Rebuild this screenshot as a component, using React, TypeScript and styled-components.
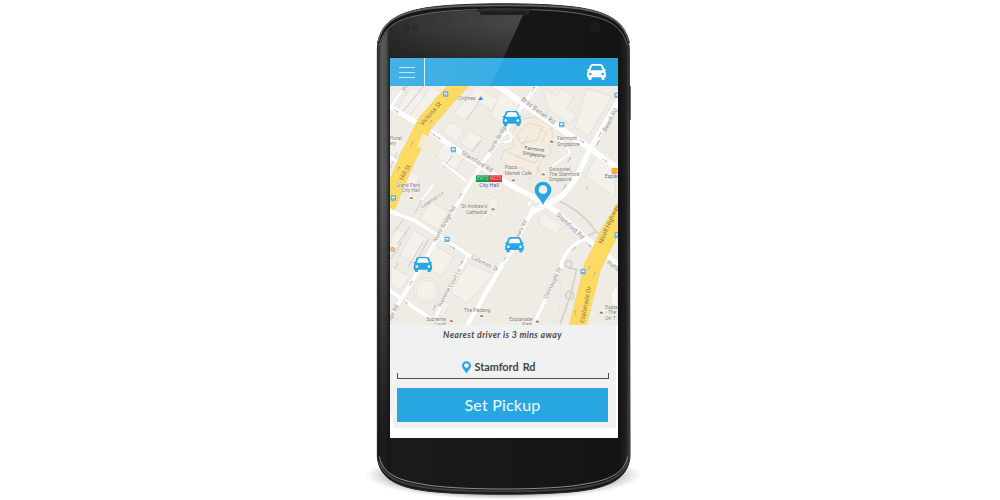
import React from 'react';
import styled, { createGlobalStyle } from 'styled-components';

const Global = createGlobalStyle`
  body { margin: 0; background: #fff; }
  * { box-sizing: border-box; }
`;

const Page = styled.main`
  width: 1000px;
  height: 500px;
  display: flex;
  justify-content: center;
  background: #fff;
  overflow: hidden;
`;

const Phone = styled.div`
  position: relative;
  width: 270px;
  height: 500px;
  margin-left: 10px;
  padding: 58px 22.5px 62px 19.5px;
`;

const Casing = styled.svg`
  position: absolute;
  inset: 0;
  width: 270px;
  height: 500px;
  overflow: visible;
`;

const Screen = styled.section`
  position: relative;
  display: flex;
  flex-direction: column;
  height: 380px;
  background: #fff;
  overflow: hidden;
`;

const Header = styled.header`
  display: flex;
  align-items: center;
  justify-content: space-between;
  height: 28px;
  flex: none;
  padding-right: 11.5px;
  background: linear-gradient(116deg, #45b1e5 0, #3aaee4 102px, #27a6e1 103px);
`;

const MenuButton = styled.button`
  display: flex;
  flex-direction: column;
  justify-content: center;
  gap: 4px;
  width: 35px;
  height: 28px;
  padding: 0 0 0 9px;
  border: 0;
  border-right: 1px solid #d5effb;
  background: none;
`;

const MenuBar = styled.span`
  width: 16px;
  height: 1px;
  background: #c3e8f8;
`;

const MapArea = styled.svg`
  display: block;
  width: 228px;
  height: 239px;
  flex: none;
`;

const Panel = styled.div`
  display: flex;
  flex-direction: column;
  align-items: center;
  height: 103px;
  margin-right: 2px;
  padding: 3px 7px 0;
  background: linear-gradient(#fff, #fff) 0 100% / 3px 13px no-repeat #f1f1f1;
`;

const Notice = styled.p`
  margin: 0;
  height: 14px;
  font: italic 700 8.8px/14px Lato, sans-serif;
  letter-spacing: 0.36px;
  color: #4a4a4a;
  white-space: nowrap;
`;

const Address = styled.div`
  display: flex;
  align-items: center;
  justify-content: center;
  gap: 4px;
  width: 212px;
  height: 22px;
  margin-top: 14px;
  padding-right: 8px;
  font: 700 10.8px/20px Lato, sans-serif;
  word-spacing: 1.5px;
  color: #444;
`;

const Bracket = styled.div`
  width: 212px;
  height: 6px;
  margin-top: -5px;
  border: 1px solid #4d4d4d;
  border-top: 0;
`;

const Pickup = styled.button`
  width: 211px;
  height: 34px;
  margin-top: 9px;
  padding: 0;
  border: 0;
  background: #27a6e1;
  color: #f2fbff;
  font: 400 16px/34px Lato, sans-serif;
  letter-spacing: 0.2px;
`;

const CarIcon = ({ x = 0, y = 0, w = 57, h = 48, body = '#27a6e1', glass = '#fff' }: {
  x?: number; y?: number; w?: number; h?: number; body?: string; glass?: string;
}) => (
  <svg x={x} y={y} width={w} height={h} viewBox="0 0 57 48">
    <path fill={body} d="M17 0h23q6 0 8 5l4 11h3q2 0 2 2t-2 3l-2 1q4 3 4 7v11h-4v4q0 4-5 4t-5-4v-4H14v4q0 4-5 4t-5-4v-4H0V29q0-4 4-7l-2-1q-2-1-2-3t2-2h3L9 5q2-5 8-5Z" />
    <path fill={glass} d="M18 5h21q3 0 4 3l4 11H10l4-11q1-3 4-3Z" />
    <circle cx="10" cy="30" r="4" fill={glass} />
    <circle cx="47" cy="30" r="4" fill={glass} />
  </svg>
);

const Pin = ({ hole = '#f1efe9' }: { hole?: string }) => (
  <>
    <path fill="#27a6e1" d="M25 0a25 25 0 0 1 25 25c0 16-17 25-25 45C17 50 0 41 0 25A25 25 0 0 1 25 0Z" />
    <circle cx="25" cy="24" r="13" fill={hole} />
  </>
);

const roads: [string, number][] = [
  ['M40 307L190 400L300 477L400 543L520 608L560 635L645 712L760 806', 17],
  ['M505 248L455 320L420 375L345 480L290 565L235 660L165 780L95 895L50 970', 12],
  ['M370 248L500 338L662 447L755 515', 19],
  ['M755 285L662 445L625 520Q585 595 535 610L480 640', 17],
  ['M50 630L130 660L200 703L295 765L380 806', 12],
  ['M478 605L490 630Q470 660 430 742L380 822L290 980', 14],
  ['M295 765L240 865L190 965', 9],
  ['M645 714Q580 750 573 800L488 980', 12],
  ['M50 865L130 920L215 980', 13],
  ['M60 322L112 250', 8],
  ['M60 470L90 490', 10],
  ['M155 600L190 555M215 485L290 545', 7],
  ['M395 425Q425 430 425 410Q420 390 400 405M545 500L600 460Q590 425 555 415', 7],
];

const blocks = [
  'M125 258L165 288L110 355L78 334', 'M185 258L213 278L140 362L118 347',
  'M320 260L385 300L365 332L330 312L290 368L250 342', 'M240 365L282 390L260 425L215 395',
  'M395 270L450 310L405 375L360 350', 'M300 390L340 415L310 455L272 430',
  'M230 415L290 455L260 510L200 470', 'M165 405L205 430L180 465L143 438',
  'M520 265L560 290L575 268L610 290L590 325L620 345L600 372L535 328',
  'M650 265L725 290L655 408L615 382', 'M680 470L735 505L735 590L645 530',
  'M60 400L110 430L80 475L60 460', 'M110 505L150 530L120 590L85 570',
  'M185 605L235 635L205 690L150 655', 'M195 735L250 770L215 830L165 800',
  'M295 790L370 822L290 910L240 875', 'M130 690L175 715L130 790L90 765',
  'M72 680L110 700L80 760L60 748', 'M65 800L120 830L90 870L60 850',
  'M210 895L240 910L220 950L190 940',
];

const Label = styled.text<{ $c?: string; $s?: number; $halo?: string }>`
  font: 400 ${p => p.$s ?? 15}px Roboto, sans-serif;
  fill: ${p => p.$c ?? '#85807b'};
  stroke: ${p => p.$halo ?? '#f7f5f0'};
  stroke-width: 2px;
  paint-order: stroke;
`;

const streets: [string, number, number, number, number, string?][] = [
  ['Victoria St', 158, 378, -49, 19, '#8c7749'], ['Hill St', 99, 542, -62, 19, '#8c7749'],
  ['Stamford Rd', 273, 462, 32, 19], ['North Bridge', 364, 460, -60, 17],
  ['Bras Basah Rd', 452, 300, 37, 19], ['Beach Rd', 708, 396, -62, 18],
  ['Coleman Ln', 157, 626, -34, 15], ['North Bridge Rd', 199, 727, -61, 17],
  ['Coleman St', 302, 775, 26, 17], ['Supreme Court Ln', 211, 922, -61, 16],
  ["Andrew's Rd", 432, 742, -63, 16], ['Stamford Rd', 558, 646, 43, 19],
  ['Connaught Dr', 530, 898, -64, 17], ['Esplanade Dr', 641, 970, -78, 19, '#8c7749'],
  ['Nicoll Highway', 696, 733, -66, 19, '#8c7749'], ['Raffles', 710, 790, 38, 17],
  ['Bridge Rd', 50, 982, -60, 17], ['Rd', 103, 274, -55, 15],
];

const places: [string[], number, number, string, string?][] = [
  [['Chijmes'], 263, 301, 'start'], [['Plural', 'ery'], 57, 420, 'start'],
  [['Grand Park', 'City Hall'], 150, 561, 'end'], [['Plaza', 'Market Café'], 404, 508, 'start'],
  [['Fairmont', 'Singapore'], 561, 421, 'start'], [['Swissotel', 'The Stamford', 'Singapore'], 537, 512, 'start'],
  [["St Andrew's", 'Cathedral'], 352, 625, 'end'], [['The Padang'], 281, 936, 'start'],
  [['Supreme', 'Court'], 228, 963, 'end'], [['Esplanade', 'Park'], 487, 963, 'end'],
  [['Espla', '- The', 'On T'], 706, 927, 'start'], [['Esplanade'], 704, 535, 'start', '#4e6c99'],
];

const arrows: [number, number, number][] = [
  [77, 332, 34], [188, 402, 34], [204, 413, 34], [489, 268, -60],
  [270, 588, -60], [122, 850, -60], [181, 367, -50], [125, 431, -62], [85, 508, -65],
  [247, 742, 30], [105, 905, 36], [635, 423, 35], [704, 481, 35], [689, 405, -62], [683, 430, -62],
  [583, 562, -60], [597, 480, -60], [404, 778, -60], [610, 747, -38], [657, 735, 40],
  [657, 805, -70], [673, 822, -70], [616, 940, -80], [192, 924, -62], [274, 790, -62],
];

const CityMap = () => (
  <MapArea viewBox="60 258 684 717" preserveAspectRatio="none">
    <rect x="60" y="258" width="684" height="717" fill="#efece5" />
    <g fill="#f4f1eb" stroke="#dedad4" strokeWidth="2">
      {blocks.map(d => <path key={d} d={`${d}Z`} />)}
      <circle cx="170" cy="872" r="38" />
      <circle cx="170" cy="872" r="31" />
      <path d="M505 650l22-10 50 38-18 27-30-24-12 5Z" />
      <path d="M355 600l26-8 5 22-12 16 12 12-10 9-16-9-22 32-12-8 25-38Z" />
      <path d="M743 850q-35 35-12 75l12 10Z" fill="#faf8ef" />
    </g>
    <g stroke="#c9c7d6" strokeWidth="3" fill="none">
      <path d="M70 700l30-42M82 733l38-53M148 770l28-52M115 800l45-75M60 780l35-55M75 805l10-18M90 345l80-98M170 340l70-80M288 360l50-70M220 505l28-40M135 640l25-52M305 455l28-35M60 505l22-50" />
    </g>
    <path d="M425 400l28-42 40-8 48 22 8 36-12 18 6 32-30 22-15 45-22 12-15-32-40-2-28-25 8-25 32-12Z" fill="#f4eddf" stroke="#dad2c4" strokeWidth="2" />
    <path d="M440 402l35-32 45 10-20 40-48 10ZM505 385l25 12-15 30M430 465l65 25 15-25M410 455l42 16M475 405l-20 35M500 500l15 28" fill="none" stroke="#e3d7c5" strokeWidth="3" />
    <g fill="none" stroke="#d6d1c7" strokeWidth="5">
      <path d="M560 600Q640 635 678 695L735 725M595 803l25 6-18 75-32 90M640 715l38-20" />
      <circle cx="596" cy="792" r="10" /><circle cx="599" cy="886" r="12" />
    </g>
    <path d="M470 670Q565 760 570 840T555 970M420 390q60-75 130 5" fill="none" stroke="#ddd9d0" strokeWidth="2" strokeDasharray="5 3" />
    <g fill="none" stroke="#e3dfd8" strokeLinejoin="round">
      {roads.map(([d, w]) => <path key={d} d={d} strokeWidth={w + 2} />)}
    </g>
    <g fill="none" stroke="#fff" strokeLinejoin="round">
      {roads.map(([d, w]) => <path key={d} d={d} strokeWidth={w} />)}
    </g>
    <g fill="none" strokeLinejoin="round">
      <path d="M280 240L225 300L165 370L110 480L52 620" stroke="#efd06f" strokeWidth="49" />
      <path d="M280 240L225 300L165 370L110 480L52 620" stroke="#fddb62" strokeWidth="47" />
      <path d="M768 620L720 695L668 800L645 890L620 990" stroke="#efd06f" strokeWidth="52" />
      <path d="M768 620L720 695L668 800L645 890L620 990" stroke="#fddb62" strokeWidth="50" />
    </g>
    <path d="M158 400l52 30-20 38-48-30Z" fill="#f1ecd8" opacity=".9" />
    <path d="M485 603l-8 22 18-8Z" fill="#efece5" />
    <g stroke="#a9abbd" strokeWidth="2" fill="none">
      {arrows.map(([x, y, r]) => <path key={`${x}-${y}`} transform={`translate(${x} ${y}) rotate(${r})`} d="M-8 0H8M4-2L8 0L4 2" />)}
    </g>
    {streets.map(([t, x, y, r, s, c]) => (
      <Label key={`${t}${x}`} $s={s} $c={c ?? '#96938f'} $halo={c ? '#fddb62' : undefined} transform={`translate(${x} ${y}) rotate(${r})`}>{t}</Label>
    ))}
    {places.map(([lines, x, y, anchor, c]) => lines.map((t, i) => (
      <Label key={`${t}${x}`} $c={c} x={x} y={y + i * 16} textAnchor={anchor as 'start' | 'end'}>{t}</Label>
    )))}
    <g transform="rotate(8 492 455)">
      <Label $c="#4e4a46" x={492} y={452} textAnchor="middle">Fairmont</Label>
      <Label $c="#4e4a46" x={492} y={468} textAnchor="middle">Singapore</Label>
    </g>
    {[[227, 282], [250, 449], [575, 374], [70, 594], [231, 718], [639, 815], [741, 286], [741, 705]].map(([x, y]) => (
      <g key={`${x}-${y}`} transform={`translate(${x} ${y})`}>
        <rect x="-8" y="-8" width="16" height="16" rx="2" fill="#62ade0" />
        <rect x="-4.500" y="-4" width="9" height="5" fill="#e4f4ff" /><path d="M-4 4h2M2 4h2" stroke="#e4f4ff" strokeWidth="2" />
      </g>
    ))}
    {[[124, 594], [430, 541], [545, 425], [520, 523], [369, 628], [335, 948], [244, 963], [502, 965], [694, 938]].map(([x, y]) => (
      <g key={`${x}-${y}`}><circle cx={x} cy={y} r="9" fill="#faf7f4" stroke="#ddd3cb" /><path d={`M${x - 5} ${y + 3}v-4l5-3 5 3v4Z`} fill="#a98172" /></g>
    ))}
    <path d="M324 300l8-11 8 11Z" fill="#5288cd" />
    <rect x="61" y="741" width="14" height="14" rx="5" fill="#f2a85c" />
    <path d="M65 748h6" stroke="#fff" strokeWidth="3" />
    <rect x="725" y="503" width="18" height="19" rx="2" fill="#f7ad3c" />
    <path d="M648 557h5v15h-5Z" fill="#d9d6d3" />
    <rect x="318" y="526" width="39" height="20" fill="#189b4b" />
    <rect x="357" y="526" width="39" height="20" fill="#dc2b34" />
    <text x="320" y="541" textLength="35" fontFamily="Roboto" fontSize="14" fill="#a5d9b6">EW13</text>
    <text x="359" y="541" textLength="35" fontFamily="Roboto" fontSize="14" fill="#f3a9ab">NS25</text>
    <Label $c="#426496" $s={16} x={357} y={561} textAnchor="middle">City Hall</Label>
    <CarIcon x={397} y={332} w={57} h={47} />
    <CarIcon x={405} y={711} w={57} h={47} />
    <CarIcon x={130} y={770} w={57} h={47} />
    <g transform="translate(494 545)"><Pin /></g>
  </MapArea>
);

const outline = 'M22 150C24 82 62 44 150 27C240 6 560 6 650 27C738 44 776 82 778 150L780 1370C776 1422 738 1456 650 1470C560 1487 240 1487 150 1470C62 1456 26 1422 22 1370Z';

const Device = () => (
  <Casing viewBox="0 0 810 1500">
    <defs>
      <radialGradient id="shade">
        <stop offset=".75" stopColor="#333" stopOpacity=".6" />
        <stop offset=".88" stopColor="#666" stopOpacity=".25" />
        <stop offset="1" stopColor="#888" stopOpacity="0" />
      </radialGradient>
      <linearGradient id="side">
        <stop offset="0" stopColor="#222" /><stop offset=".018" stopColor="#5c5c5c" /><stop offset=".035" stopColor="#505050" />
        <stop offset=".05" stopColor="#1b1b1b" /><stop offset=".96" stopColor="#141414" /><stop offset=".985" stopColor="#202020" /><stop offset="1" stopColor="#4a4a4a" />
      </linearGradient>
      <linearGradient id="dim" x1="0" y1="0" x2="0" y2="1">
        <stop offset=".3" stopColor="#121212" stopOpacity="0" /><stop offset=".85" stopColor="#121212" stopOpacity=".85" />
      </linearGradient>
      <linearGradient id="sheen" x1="0" y1="0" x2="1" y2="0">
        <stop offset="0" stopColor="#2c2c2c" /><stop offset=".25" stopColor="#363636" /><stop offset="1" stopColor="#484848" />
      </linearGradient>
      <linearGradient id="fade" x1="0" y1="0" x2="0" y2="1">
        <stop offset="0" stopColor="#151515" stopOpacity="0" /><stop offset="1" stopColor="#151515" stopOpacity=".45" />
      </linearGradient>
      <clipPath id="face"><path d={outline} /></clipPath>
    </defs>
    <ellipse cx="400" cy="1425" rx="415" ry="74" fill="url(#shade)" />
    <rect x="776" y="258" width="6" height="102" rx="2" fill="#222" />
    <path d={outline} fill="url(#side)" stroke="#292929" strokeWidth="3" />
    <g clipPath="url(#face)">
      <rect x="22" y="150" width="40" height="1330" fill="url(#dim)" />
      <path d="M56 174V84Q84 48 150 40Q280 26 466 30L400 174Z" fill="url(#sheen)" />
      <path d="M56 80H443L400 174H56Z" fill="url(#fade)" />
    </g>
    <path d="M27 130C38 80 75 52 155 38C245 20 555 20 645 38C725 52 762 80 774 130" fill="none" stroke="#171717" strokeWidth="12" />
    <path d="M25 125C36 70 75 44 155 29C245 12 555 12 645 29C725 44 764 70 776 125" fill="none" stroke="#5e6262" strokeWidth="5" />
    <path d="M28 135C45 82 75 58 155 44C245 22 555 22 645 44C725 58 755 82 772 135" fill="none" stroke="#909090" strokeWidth="2" />
    <path d="M28 1370C38 1420 80 1440 155 1452C250 1472 550 1472 645 1452C720 1440 762 1420 773 1370" fill="none" stroke="#a5a5a5" strokeWidth="2.500" />
    <path d="M26 1385C42 1430 85 1450 155 1460C250 1478 550 1478 645 1460C715 1450 758 1430 775 1385" fill="none" stroke="#3e3e3e" strokeWidth="6" />
    <path d="M320 28H490Q478 32 473 45H332Q328 32 320 28Z" fill="#282828" />
    <path d="M334 37H470M334 42H470" stroke="#0c0c0c" strokeWidth="3" strokeDasharray="3 3" />
    <circle cx="110" cy="81" r="10" fill="#2c2c2c" /><circle cx="135" cy="81" r="10" fill="#2c2c2c" />
    <circle cx="674" cy="80" r="16" fill="#1c1c1e" /><circle cx="674" cy="80" r="8" fill="#171722" /><circle cx="673" cy="78" r="3" fill="#262640" />
  </Casing>
);

export default function App() {
  return (
    <Page>
      <Global />
      <Phone>
        <Device />
        <Screen>
          <Header>
            <MenuButton aria-label="Menu"><MenuBar /><MenuBar /><MenuBar /></MenuButton>
            <svg width="19" height="16" viewBox="0 0 57 48"><CarIcon body="#fff" glass="#27a6e1" /></svg>
          </Header>
          <CityMap />
          <Panel>
            <Notice>Nearest driver is 3 mins away</Notice>
            <Address>
              <svg width="9" height="13" viewBox="0 0 50 70"><Pin hole="#f1f1f1" /></svg>
              Stamford Rd
            </Address>
            <Bracket />
            <Pickup>Set Pickup</Pickup>
          </Panel>
        </Screen>
      </Phone>
    </Page>
  );
}
